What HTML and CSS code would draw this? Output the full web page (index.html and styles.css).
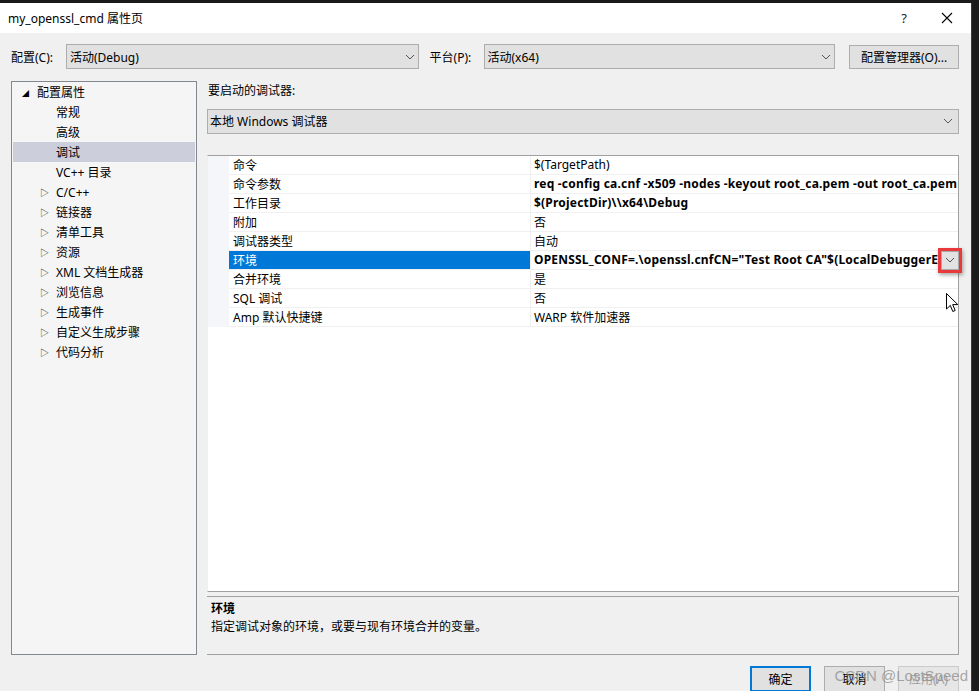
FILE: index.html
```html
<!DOCTYPE html>
<html>
<head>
<meta charset="utf-8">
<link rel="stylesheet" href="styles.css">
</head>
<body>
<div class="window">
  <div class="titlebar">
    <span class="title">my_openssl_cmd 属性页</span>
    <span class="help">?</span>
    <svg class="close" width="12" height="12" viewBox="0 0 12 12"><path d="M1 1L11 11M11 1L1 11" stroke="#000" stroke-width="1.1" fill="none"/></svg>
  </div>
  <div class="content">
    <div class="config-row">
      <span class="lbl lbl-config">配置(C):</span>
      <div class="combo combo-config"><span>活动(Debug)</span><svg class="chev" width="10" height="6" viewBox="0 0 10 6"><path d="M1 1L5 5L9 1" stroke="#555" fill="none"/></svg></div>
      <span class="lbl lbl-platform">平台(P):</span>
      <div class="combo combo-platform"><span>活动(x64)</span><svg class="chev" width="10" height="6" viewBox="0 0 10 6"><path d="M1 1L5 5L9 1" stroke="#555" fill="none"/></svg></div>
      <div class="btn btn-mgr">配置管理器(O)...</div>
    </div>
    <div class="main">
      <div class="tree">
        <div class="node root"><span class="exp">◢</span>配置属性</div>
        <div class="node child">常规</div>
        <div class="node child">高级</div>
        <div class="node child sel">调试</div>
        <div class="node child">VC++ 目录</div>
        <div class="node child"><span class="col">▷</span>C/C++</div>
        <div class="node child"><span class="col">▷</span>链接器</div>
        <div class="node child"><span class="col">▷</span>清单工具</div>
        <div class="node child"><span class="col">▷</span>资源</div>
        <div class="node child"><span class="col">▷</span>XML 文档生成器</div>
        <div class="node child"><span class="col">▷</span>浏览信息</div>
        <div class="node child"><span class="col">▷</span>生成事件</div>
        <div class="node child"><span class="col">▷</span>自定义生成步骤</div>
        <div class="node child"><span class="col">▷</span>代码分析</div>
      </div>
      <div class="right">
        <div class="dbg-label">要启动的调试器:</div>
        <div class="combo combo-dbg"><span>本地 Windows 调试器</span><svg class="chev" width="10" height="6" viewBox="0 0 10 6"><path d="M1 1L5 5L9 1" stroke="#555" fill="none"/></svg></div>
        <div class="grid">
          <div class="row"><div class="gut"></div><div class="name">命令</div><div class="val">$(TargetPath)</div></div>
          <div class="row"><div class="gut"></div><div class="name">命令参数</div><div class="val b">req -config ca.cnf -x509 -nodes -keyout root_ca.pem -out root_ca.pem -newkey rsa:2048</div></div>
          <div class="row"><div class="gut"></div><div class="name">工作目录</div><div class="val b">$(ProjectDir)\\x64\Debug</div></div>
          <div class="row"><div class="gut"></div><div class="name">附加</div><div class="val">否</div></div>
          <div class="row"><div class="gut"></div><div class="name">调试器类型</div><div class="val">自动</div></div>
          <div class="row selrow"><div class="gut"></div><div class="name">环境</div><div class="val b">OPENSSL_CONF=.\openssl.cnfCN="Test Root CA"$(LocalDebuggerEnvironment)</div>
            <div class="ddbtn"><div class="ddinner"><svg width="10" height="6" viewBox="0 0 10 6"><path d="M1 1L5 5L9 1" stroke="#555" fill="none"/></svg></div></div>
          </div>
          <div class="row"><div class="gut"></div><div class="name">合并环境</div><div class="val">是</div></div>
          <div class="row"><div class="gut"></div><div class="name">SQL 调试</div><div class="val">否</div></div>
          <div class="row"><div class="gut"></div><div class="name">Amp 默认快捷键</div><div class="val">WARP 软件加速器</div></div>
          <svg class="cursor" width="13" height="20" viewBox="0 0 13 20"><path d="M0.5 0.5L0.5 16L4.3 12.4L6.8 18.5L9.2 17.5L6.7 11.6L11.8 11.6Z" fill="#fff" stroke="#000" stroke-width="1"/></svg>
        </div>
        <div class="desc">
          <div class="desc-title">环境</div>
          <div class="desc-text">指定调试对象的环境，或要与现有环境合并的变量。</div>
        </div>
      </div>
    </div>
    <div class="footer">
      <div class="btn btn-ok">确定</div>
      <div class="btn">取消</div>
      <div class="btn disabled">应用(A)</div>
      <div class="watermark">CSDN @LostSpeed</div>
    </div>
  </div>
</div>
</body>
</html>
```

FILE: styles.css
```css
html, body {
  margin: 0;
  padding: 0;
}
body {
  background: #1b1b1b;
  width: 979px;
  height: 691px;
  overflow: hidden;
  font-family: "Segoe UI", "Noto Sans", "Noto Sans CJK SC", sans-serif;
  font-size: 12px;
  color: #000;
}
.window {
  margin-top: 3px;
  width: 972px;
  height: 688px;
  background: #f0f0f0;
  display: flex;
  flex-direction: column;
  border-right: 1px solid #3a3a3a;
  box-sizing: border-box;
}
.titlebar {
  height: 30px;
  background: #fff;
  display: flex;
  align-items: center;
  padding-left: 8px;
  flex-shrink: 0;
}
.title {
  flex: 1;
  font-size: 12px;
}
.help {
  font-size: 13px;
  margin-right: 34px;
  color: #222;
}
.close {
  margin-right: 18px;
}
.content {
  flex: 1;
  display: flex;
  flex-direction: column;
  padding: 11px 12px 0 11px;
}
.config-row {
  display: flex;
  align-items: center;
  height: 25px;
}
.lbl-config {
  width: 55px;
}
.lbl-platform {
  margin-left: 11px;
  width: 54px;
}
.combo {
  box-sizing: border-box;
  height: 25px;
  background: #e1e1e1;
  border: 1px solid #adadad;
  display: flex;
  align-items: center;
  padding-left: 3px;
  padding-right: 3px;
}
.combo span {
  flex: 1;
}
.combo-config {
  width: 353px;
}
.combo-platform {
  width: 352px;
}
.btn {
  box-sizing: border-box;
  height: 25px;
  background: #e1e1e1;
  border: 1px solid #adadad;
  display: flex;
  align-items: center;
  justify-content: center;
}
.btn-mgr {
  margin-left: 14px;
  width: 110px;
  height: 24px;
}
.main {
  display: flex;
  margin-top: 12px;
  height: 574px;
}
.tree {
  width: 186px;
  box-sizing: border-box;
  border: 1px solid #828790;
  background: #f5f5f5;
  padding: 0 1px;
}
.node {
  height: 20px;
  display: flex;
  align-items: center;
  position: relative;
}
.root {
  padding-left: 24px;
}
.exp {
  position: absolute;
  left: 9px;
  font-size: 7px;
  top: 6px;
}
.child {
  padding-left: 43px;
}
.col {
  position: absolute;
  left: 27px;
  font-size: 9px;
  color: #222;
  top: 4px;
}
.sel {
  background: #cccedb;
}
.right {
  margin-left: 10px;
  width: 752px;
  display: flex;
  flex-direction: column;
}
.dbg-label {
  height: 18px;
  display: flex;
  align-items: center;
  padding-left: 1px;
}
.combo-dbg {
  margin-top: 10px;
  height: 25px;
  width: 752px;
  padding-left: 2px;
  padding-right: 5px;
}
.grid {
  margin-top: 21px;
  height: 439px;
  box-sizing: border-box;
  border: 1px solid #a0a0a0;
  border-left-color: #f0f0f0;
  background: #fff;
  position: relative;
}
.row {
  display: flex;
  height: 19px;
  position: relative;
}
.gut {
  width: 21px;
  background: #f4f6fa;
  flex-shrink: 0;
}
.name {
  width: 302px;
  flex-shrink: 0;
  box-sizing: border-box;
  padding-left: 4px;
  border-bottom: 1px solid #f0f0f0;
  border-right: 1px solid #f0f0f0;
  display: flex;
  align-items: center;
  white-space: nowrap;
}
.val {
  flex: 1;
  min-width: 0;
  padding-left: 3px;
  border-bottom: 1px solid #f0f0f0;
  display: flex;
  align-items: center;
  white-space: nowrap;
  overflow: hidden;
}
.b {
  font-weight: bold;
  letter-spacing: 0.2px;
}
.selrow .val {
  margin-right: 20px;
}
.selrow .name {
  background: #0078d7;
  color: #fff;
}
.ddbtn {
  position: absolute;
  right: -4px;
  top: -3px;
  width: 24px;
  height: 25px;
  box-sizing: border-box;
  border: 3px solid #e8393d;
  background: #e8393d;
  box-shadow: 1px 2px 4px rgba(0,0,0,0.35);
}
.ddinner {
  width: 100%;
  height: 100%;
  box-sizing: border-box;
  border: 1px solid #a8a8a8;
  background: #e2e2e2;
  display: flex;
  align-items: center;
  justify-content: center;
}
.cursor {
  position: absolute;
  left: 738px;
  top: 137px;
}
.desc {
  margin-top: 4px;
  height: 59px;
  box-sizing: border-box;
  border: 1px solid #a0a0a0;
  border-left: none;
  padding: 2px 4px;
}
.desc-title {
  font-weight: bold;
  height: 17px;
  display: flex;
  align-items: center;
}
.desc-text {
  height: 19px;
  display: flex;
  align-items: center;
}
.footer {
  display: flex;
  justify-content: flex-end;
  gap: 13px;
  margin-top: 11px;
  position: relative;
}
.footer .btn {
  width: 61px;
  height: 26px;
}
.btn-ok {
  border: 2px solid #0078d7;
}
.disabled {
  color: #a0a0a0;
  background: #e6e6e6;
  border-color: #cbcbcb;
}
.watermark {
  position: absolute;
  right: -9px;
  top: 1px;
  font-family: "Liberation Sans", sans-serif;
  font-size: 15px;
  color: rgba(140, 140, 140, 0.75);
  pointer-events: none;
}
```
